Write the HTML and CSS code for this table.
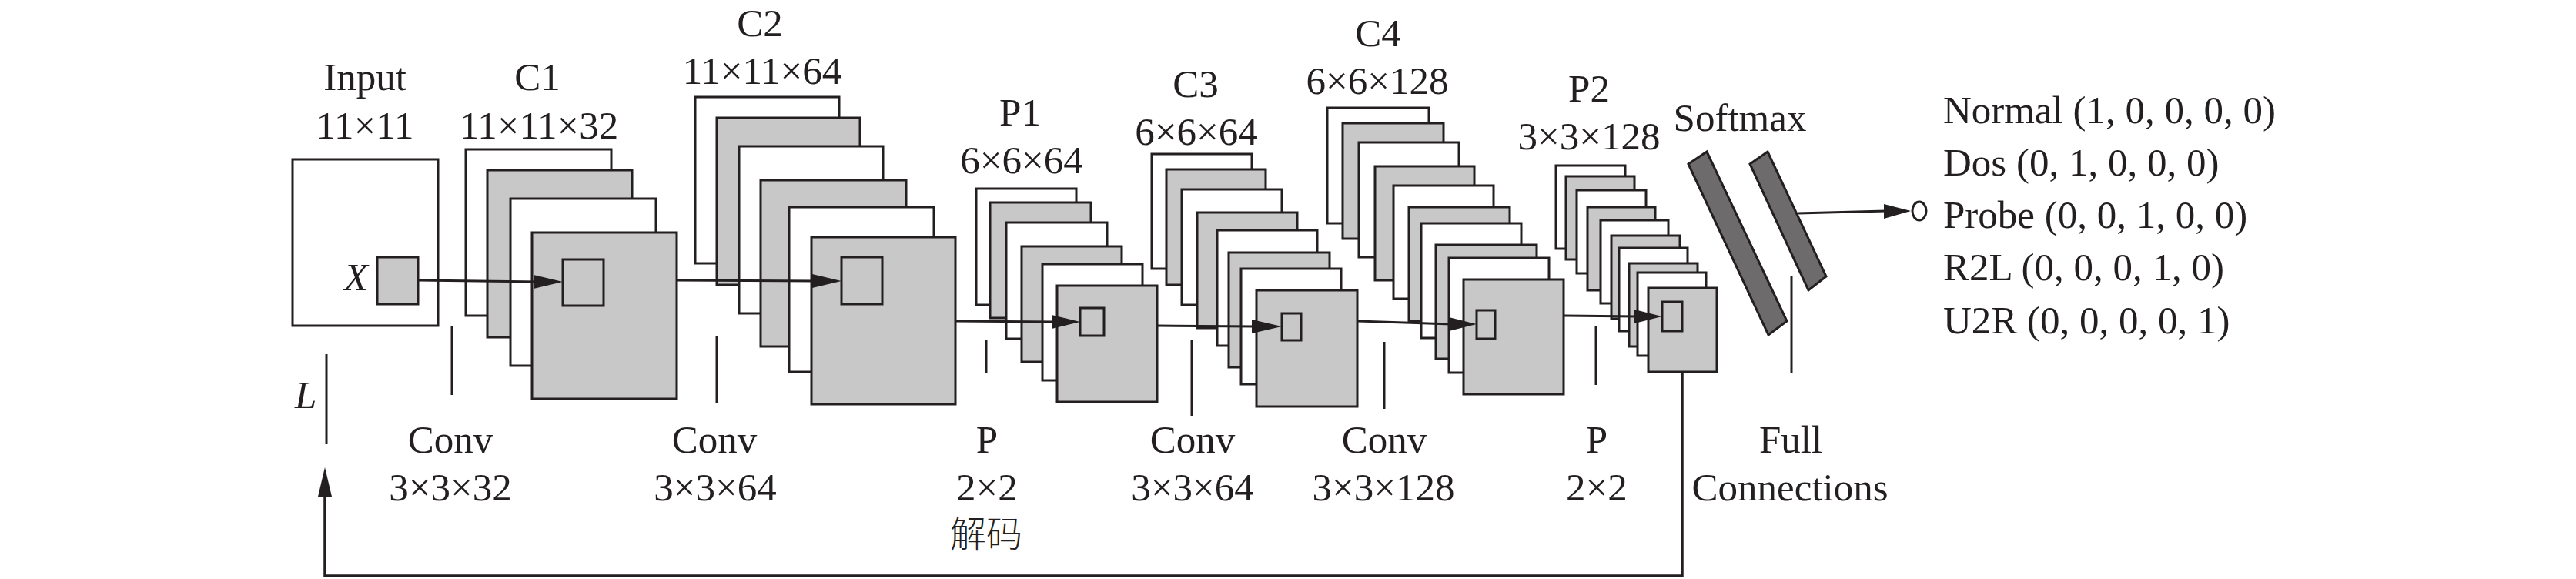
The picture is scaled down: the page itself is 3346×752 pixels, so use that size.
FILE: index.html
```html
<!DOCTYPE html>
<html lang="zh">
<head>
<meta charset="utf-8">
<title>CNN 结构图</title>
<link rel="stylesheet" href="styles.css">
</head>
<body>
<figure class="figure">
<svg class="diagram" viewBox="0 0 3346 752" width="3346" height="752" xmlns="http://www.w3.org/2000/svg">
  <!-- Input -->
  <rect class="w" x="380" y="207" width="189" height="216"/>
  <rect class="g" x="490" y="334" width="53" height="61"/>

  <!-- C1 -->
  <rect class="w" x="605" y="194" width="189" height="216"/>
  <rect class="g" x="633" y="221" width="188" height="217"/>
  <rect class="w" x="663" y="258" width="189" height="217"/>
  <rect class="g" x="691" y="302" width="188" height="216"/>
  <rect class="g" x="731" y="337" width="53" height="60"/>

  <!-- C2 -->
  <rect class="w" x="903" y="126" width="187" height="216"/>
  <rect class="g" x="931" y="153" width="186" height="217"/>
  <rect class="w" x="960" y="190" width="187" height="217"/>
  <rect class="g" x="988" y="234" width="189" height="216"/>
  <rect class="w" x="1025" y="269" width="188" height="214"/>
  <rect class="g" x="1054" y="308" width="187" height="217"/>
  <rect class="g" x="1093" y="334" width="53" height="61"/>

  <!-- P1 -->
  <rect class="w" x="1268" y="245" width="130" height="151"/>
  <rect class="g" x="1286" y="263" width="131" height="150"/>
  <rect class="w" x="1307" y="289" width="131" height="151"/>
  <rect class="g" x="1327" y="320" width="130" height="150"/>
  <rect class="w" x="1354" y="343" width="130" height="151"/>
  <rect class="g" x="1373" y="371" width="130" height="151"/>
  <rect class="g" x="1403" y="400" width="31" height="36"/>

  <!-- C3 -->
  <rect class="w" x="1496" y="200" width="130" height="149"/>
  <rect class="g" x="1515" y="220" width="129" height="150"/>
  <rect class="w" x="1535" y="246" width="130" height="150"/>
  <rect class="g" x="1555" y="276" width="130" height="150"/>
  <rect class="w" x="1581" y="299" width="130" height="150"/>
  <rect class="g" x="1596" y="328" width="131" height="149"/>
  <rect class="w" x="1612" y="349" width="130" height="150"/>
  <rect class="g" x="1632" y="377" width="131" height="151"/>
  <rect class="g" x="1665" y="407" width="25" height="35"/>

  <!-- C4 -->
  <rect class="w" x="1724" y="140" width="132" height="150"/>
  <rect class="g" x="1744" y="160" width="131" height="150"/>
  <rect class="w" x="1765" y="185" width="130" height="149"/>
  <rect class="g" x="1786" y="216" width="129" height="148"/>
  <rect class="w" x="1810" y="241" width="130" height="147"/>
  <rect class="g" x="1830" y="269" width="131" height="148"/>
  <rect class="w" x="1846" y="290" width="130" height="149"/>
  <rect class="g" x="1865" y="318" width="131" height="148"/>
  <rect class="w" x="1882" y="335" width="130" height="149"/>
  <rect class="g" x="1901" y="363" width="130" height="149"/>
  <rect class="g" x="1918" y="403" width="24" height="37"/>

  <!-- P2 -->
  <rect class="w" x="2021" y="215" width="90" height="108"/>
  <rect class="g" x="2034" y="229" width="89" height="108"/>
  <rect class="w" x="2048" y="247" width="90" height="108"/>
  <rect class="g" x="2062" y="269" width="88" height="108"/>
  <rect class="w" x="2079" y="286" width="88" height="108"/>
  <rect class="g" x="2093" y="306" width="89" height="108"/>
  <rect class="w" x="2103" y="322" width="89" height="108"/>
  <rect class="g" x="2116" y="342" width="89" height="108"/>
  <rect class="w" x="2127" y="354" width="89" height="108"/>
  <rect class="g" x="2141" y="374" width="89" height="109"/>
  <rect class="g" x="2159" y="392" width="26" height="38"/>

  <!-- Softmax bars -->
  <polygon class="d" points="2193,213 2217,197 2321,417 2297,435"/>
  <polygon class="d" points="2273,213 2296,197 2372,359 2349,377"/>

  <!-- arrows -->
  <line class="ln" x1="543" y1="364" x2="700" y2="366"/>
  <polygon class="ah" points="693,357 731,366 693,375"/>
  <line class="ln" x1="879" y1="364" x2="1060" y2="365"/>
  <polygon class="ah" points="1055,356 1093,365 1055,374"/>
  <line class="ln" x1="1241" y1="417" x2="1370" y2="418"/>
  <polygon class="ah" points="1366,409 1403,418 1366,427"/>
  <line class="ln" x1="1503" y1="423" x2="1630" y2="424"/>
  <polygon class="ah" points="1626,415 1665,424 1626,433"/>
  <line class="ln" x1="1763" y1="417" x2="1886" y2="421"/>
  <polygon class="ah" points="1882,412 1918,421 1882,430"/>
  <line class="ln" x1="2031" y1="410" x2="2126" y2="411"/>
  <polygon class="ah" points="2123,402 2159,411 2123,420"/>
  <line class="ln" x1="2335" y1="277" x2="2450" y2="274"/>
  <polygon class="ah" points="2447,265 2482,274 2447,284"/>
  <ellipse class="o" cx="2493" cy="274" rx="9" ry="12"/>

  <!-- ticks -->
  <line class="ln" x1="424" y1="460" x2="424" y2="577"/>
  <line class="ln" x1="587" y1="423" x2="587" y2="513"/>
  <line class="ln" x1="931" y1="436" x2="931" y2="523"/>
  <line class="ln" x1="1281" y1="442" x2="1281" y2="484"/>
  <line class="ln" x1="1548" y1="441" x2="1548" y2="540"/>
  <line class="ln" x1="1798" y1="444" x2="1798" y2="531"/>
  <line class="ln" x1="2073" y1="423" x2="2073" y2="500"/>
  <line class="ln" x1="2327" y1="359" x2="2327" y2="485"/>

  <!-- feedback loop -->
  <polyline class="loop" points="2185,483 2185,748 422,748 422,640"/>
  <polygon class="ah" points="413,645 422,607 431,645"/>

  <!-- top labels -->
  <text class="t" x="474" y="117">Input</text>
  <text class="t" x="474" y="180">11×11</text>
  <text class="t" x="698" y="117">C1</text>
  <text class="t" x="700" y="180">11×11×32</text>
  <text class="t" x="987" y="47">C2</text>
  <text class="t" x="990" y="109">11×11×64</text>
  <text class="t" x="1325" y="163">P1</text>
  <text class="t" x="1327" y="225">6×6×64</text>
  <text class="t" x="1553" y="126">C3</text>
  <text class="t" x="1554" y="188">6×6×64</text>
  <text class="t" x="1790" y="60">C4</text>
  <text class="t" x="1789" y="122">6×6×128</text>
  <text class="t" x="2064" y="132">P2</text>
  <text class="t" x="2064" y="194">3×3×128</text>
  <text class="t" x="2260" y="170">Softmax</text>

  <text class="var end" x="478" y="377">X</text>
  <text class="var" x="383" y="530">L</text>

  <!-- bottom labels -->
  <text class="t" x="585" y="588">Conv</text>
  <text class="t" x="585" y="650">3×3×32</text>
  <text class="t" x="928" y="588">Conv</text>
  <text class="t" x="929" y="650">3×3×64</text>
  <text class="t" x="1282" y="588">P</text>
  <text class="t" x="1282" y="650">2×2</text>
  <text class="t cjk" x="1281" y="710">解码</text>
  <text class="t" x="1549" y="588">Conv</text>
  <text class="t" x="1549" y="650">3×3×64</text>
  <text class="t" x="1798" y="588">Conv</text>
  <text class="t" x="1797" y="650">3×3×128</text>
  <text class="t" x="2074" y="588">P</text>
  <text class="t" x="2074" y="650">2×2</text>
  <text class="t" x="2326" y="588">Full</text>
  <text class="t" x="2325" y="650">Connections</text>

  <!-- outputs -->
  <text class="out" x="2524" y="160">Normal (1, 0, 0, 0, 0)</text>
  <text class="out" x="2524" y="228">Dos (0, 1, 0, 0, 0)</text>
  <text class="out" x="2524" y="296">Probe (0, 0, 1, 0, 0)</text>
  <text class="out" x="2524" y="364">R2L (0, 0, 0, 1, 0)</text>
  <text class="out" x="2524" y="433">U2R (0, 0, 0, 0, 1)</text>
</svg>
</figure>
</body>
</html>
```

FILE: styles.css
```css
html, body {
  margin: 0;
  padding: 0;
  background: #ffffff;
}

.figure {
  margin: 0;
  width: 3346px;
  height: 752px;
  overflow: hidden;
}

.diagram {
  display: block;
}

.w {
  fill: #ffffff;
  stroke: #231f20;
  stroke-width: 3;
}

.g {
  fill: #c8c8c8;
  stroke: #231f20;
  stroke-width: 3;
}

.d {
  fill: #6d6b6c;
  stroke: #231f20;
  stroke-width: 3;
  stroke-linejoin: miter;
}

.ln {
  stroke: #231f20;
  stroke-width: 3;
  fill: none;
}

.loop {
  stroke: #231f20;
  stroke-width: 3.5;
  fill: none;
}

.ah {
  fill: #231f20;
  stroke: none;
}

.o {
  fill: #ffffff;
  stroke: #231f20;
  stroke-width: 3;
}

.t,
.out,
.var {
  font-family: "Liberation Serif", "Times New Roman", "Noto Sans CJK SC", serif;
  font-size: 51px;
  fill: #231f20;
}

.t {
  text-anchor: middle;
}

.var {
  font-style: italic;
}

.end {
  text-anchor: end;
}

.cjk {
  font-family: "Noto Sans CJK SC", sans-serif;
  font-size: 47px;
  font-weight: 300;
}
```
